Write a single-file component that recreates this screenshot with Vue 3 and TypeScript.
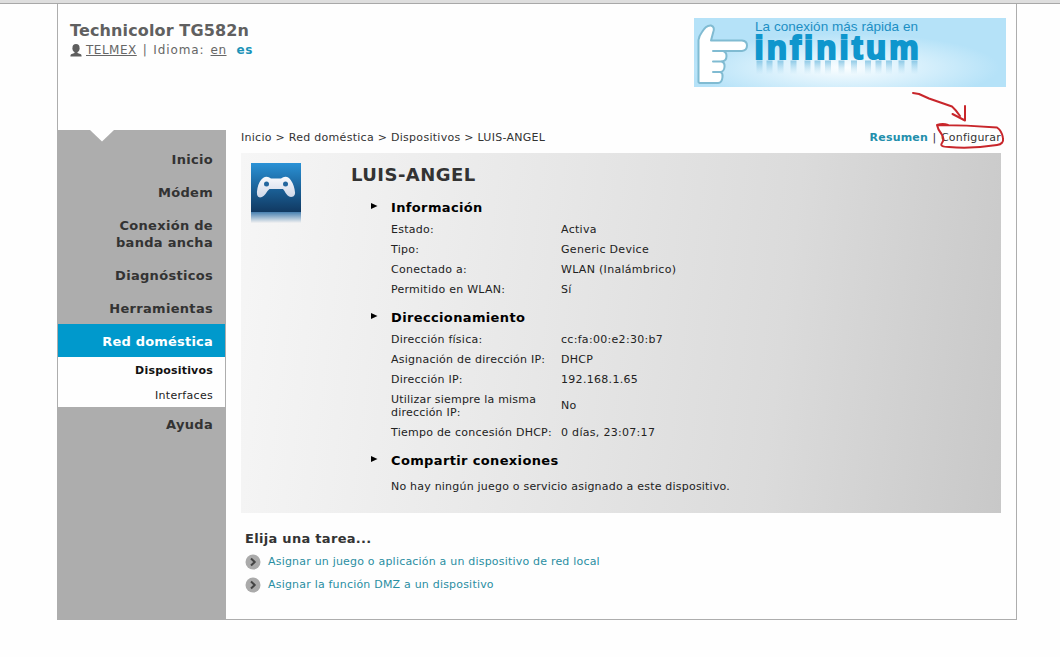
<script setup lang="ts">
interface Row { label: string; value: string; tall?: boolean }
interface Section { title: string; rows: Row[]; note?: string }

const menu: string[] = ['Inicio', 'Módem', 'Conexión de banda ancha', 'Diagnósticos', 'Herramientas']
const crumbs: string[] = ['Inicio', 'Red doméstica', 'Dispositivos', 'LUIS-ANGEL']
const sections: Section[] = [
  {
    title: 'Información',
    rows: [
      { label: 'Estado:', value: 'Activa' },
      { label: 'Tipo:', value: 'Generic Device' },
      { label: 'Conectado a:', value: 'WLAN (Inalámbrico)' },
      { label: 'Permitido en WLAN:', value: 'Sí' },
    ],
  },
  {
    title: 'Direccionamiento',
    rows: [
      { label: 'Dirección física:', value: 'cc:fa:00:e2:30:b7' },
      { label: 'Asignación de dirección IP:', value: 'DHCP' },
      { label: 'Dirección IP:', value: '192.168.1.65' },
      { label: 'Utilizar siempre la misma dirección IP:', value: 'No', tall: true },
      { label: 'Tiempo de concesión DHCP:', value: '0 días, 23:07:17' },
    ],
  },
  {
    title: 'Compartir conexiones',
    rows: [],
    note: 'No hay ningún juego o servicio asignado a este dispositivo.',
  },
]
const tasks: string[] = [
  'Asignar un juego o aplicación a un dispositivo de red local',
  'Asignar la función DMZ a un dispositivo',
]
// Left edges of the letter stems whose reflections fade below the logo
const stems: number[] = [62.5, 72.5, 83.5, 96.5, 110.5, 120.5, 131, 144.5, 157, 171, 181.5, 192, 204.5, 217.5]
</script>

<template>
  <div class="screen">
    <div class="topbar"></div>
    <div class="page">
      <header class="header">
        <div class="brand">
          <h1>Technicolor TG582n</h1>
          <div class="userline">
            <svg class="user" width="12" height="13" viewBox="0 0 12 13">
              <ellipse cx="6" cy="4.2" rx="3.6" ry="4.1" fill="#5e5e5e" />
              <path d="M4.5 7h3v2l3.4 1.2q.7.4.7 2.3H.4q0-1.9.7-2.3L4.5 9z" fill="#5e5e5e" />
            </svg>
            <a class="u telmex">TELMEX</a><span class="bar">|</span><span class="idioma">Idioma:</span><a class="u en">en</a><b class="es">es</b>
          </div>
        </div>
        <svg class="banner" width="312" height="69" viewBox="0 0 312 69">
          <defs>
            <radialGradient id="glow" cx="0.48" cy="0.72" r="0.5">
              <stop offset="0" stop-color="#fbfeff" />
              <stop offset="0.35" stop-color="#e2f4fd" />
              <stop offset="1" stop-color="#b5e2f8" />
            </radialGradient>
            <linearGradient id="mirror" x1="0" y1="0" x2="0" y2="1">
              <stop offset="0" stop-color="#5fb2da" stop-opacity="0.65" />
              <stop offset="1" stop-color="#9fd4ee" stop-opacity="0" />
            </linearGradient>
          </defs>
          <rect width="312" height="69" fill="url(#glow)" />
          <path d="M4.5 64V22Q5 18 8 14Q12 7 17 7.5Q21.5 9 19 15L17 22.5H48Q53 23 53 27.5Q53 32.5 48 33H29Q32.5 34 32.5 38Q32.5 43 28 43.5Q31 45 30.5 49Q30 53.5 26.5 54Q29 55 28.5 59Q28 65 24 65H5.5Z" fill="#fff" stroke="#80bbd2" stroke-width="2" stroke-linejoin="round" />
          <path d="M19 33H29M19 43.5H28M19 54H26" stroke="#80bbd2" stroke-width="2" stroke-linecap="round" />
          <rect v-for="x in stems" :key="x" :x="x" y="42.5" width="6" height="14" fill="url(#mirror)" />
          <text class="slogan" x="61" y="13" textLength="163" lengthAdjust="spacing">La conexión más rápida en</text>
          <text class="logo" x="60.5" y="41" textLength="164" lengthAdjust="spacing">infinitum</text>
        </svg>
      </header>

      <div class="body">
        <nav class="sidebar">
          <svg class="notch" width="24" height="12" viewBox="0 0 24 12"><path d="M0 0H24L12 11.5Z" fill="#fff" /></svg>
          <a v-for="m in menu" :key="m" class="item">{{ m }}</a>
          <a class="item active">Red doméstica</a>
          <div class="sub">
            <a class="selected">Dispositivos</a>
            <a>Interfaces</a>
          </div>
          <a class="item">Ayuda</a>
        </nav>

        <main class="main">
          <div class="crumbbar">
            <span class="crumbs">{{ crumbs.join(' > ') }}</span>
            <span class="tabs"><b>Resumen</b><i>|</i><a>Configurar</a></span>
            <svg class="scribble" width="100" height="62" viewBox="0 0 100 62" fill="none" stroke="#c8262b" stroke-width="2" stroke-linecap="round" stroke-linejoin="round">
              <path d="M7 4L13 5L23 9.5L46 17.5Q50 21 54 27" />
              <path d="M59 17V31.5L46.5 25" />
              <path d="M31 36Q60 36 91 38.5Q96 42 97 49Q98 55 91 56Q65 60 43 58Q33 58 36 54Q39 50 35.5 45Q32 41 31 36Q37 34 42 36" />
            </svg>
          </div>

          <section class="panel">
            <svg class="device" width="50" height="60" viewBox="0 0 50 60">
              <defs>
                <linearGradient id="blue" x1="0" y1="0" x2="0" y2="1">
                  <stop offset="0" stop-color="#2a92d6" />
                  <stop offset="0.5" stop-color="#1b6299" />
                  <stop offset="1" stop-color="#10375f" />
                </linearGradient>
                <linearGradient id="shadow" x1="0" y1="0" x2="0" y2="1">
                  <stop offset="0" stop-color="#4880b0" />
                  <stop offset="1" stop-color="#f2f2f2" />
                </linearGradient>
                <linearGradient id="pad" x1="0" y1="0" x2="0" y2="1">
                  <stop offset="0" stop-color="#f8f9fc" />
                  <stop offset="1" stop-color="#cfd8e8" />
                </linearGradient>
              </defs>
              <rect width="50" height="50" fill="url(#blue)" />
              <rect y="49" width="50" height="11" fill="url(#shadow)" />
              <path d="M12 15Q16 12.500 20 15.500H30Q34 12.500 38 15Q42 19 43.500 26Q45.500 34 40 34Q36 33.500 33.500 28L32 26H18.500L16.500 28Q13 34 9 34.500Q4.500 34 6.500 25Q8 18 12 15Z" fill="url(#pad)" />
              <circle cx="15.5" cy="21" r="2.5" fill="#23669e" />
              <circle cx="34.5" cy="21" r="2.5" fill="#23669e" />
            </svg>
            <div class="details">
              <h2>LUIS-ANGEL</h2>
              <div v-for="s in sections" :key="s.title" class="section">
                <h3><svg width="7" height="6" viewBox="0 0 7 6"><path d="M0 0L6.500 3L0 6Z" fill="#000" /></svg><span>{{ s.title }}</span></h3>
                <div v-for="r in s.rows" :key="r.label" class="row" :class="{ tall: r.tall }">
                  <span class="label">{{ r.label }}</span><span>{{ r.value }}</span>
                </div>
                <p v-if="s.note">{{ s.note }}</p>
              </div>
            </div>
          </section>

          <section class="tasks">
            <h4>Elija una tarea...</h4>
            <a v-for="t in tasks" :key="t">
              <svg width="16" height="16" viewBox="0 0 16 16">
                <circle cx="8" cy="8" r="7.5" fill="#aaaaaa" />
                <path d="M6 4.5L9.7 8L6 11.5" fill="none" stroke="#444" stroke-width="2" />
              </svg><span>{{ t }}</span>
            </a>
          </section>
        </main>
      </div>
    </div>
  </div>
</template>

<style>
body { margin: 0; background: #fff; overflow: hidden; }
</style>

<style scoped>
* { box-sizing: border-box; }
.screen { width: 1060px; height: 657px; background: #fefefe; font-family: Verdana, "DejaVu Sans", sans-serif; font-size: 11px; color: #222; white-space: nowrap; }
h1, h2, h3, h4, p { margin: 0; }
.topbar { height: 4px; background: #dedede; border-bottom: 1px solid #a8a8a8; }
.page { width: 960px; height: 616px; margin-left: 57px; border: 1px solid #adadad; border-top: 0; display: flex; flex-direction: column; }
.header { height: 126px; display: flex; justify-content: space-between; padding: 14px 10px 0 12px; }
.brand { padding-top: 2px; color: #666; }
h1 { font-size: 16px; line-height: 21px; letter-spacing: .13px; color: #606060; }
.userline { display: flex; align-items: center; height: 18px; font-size: 12px; letter-spacing: .5px; }
.user { margin-right: 4px; }
.u { text-decoration: underline; }
.idioma { letter-spacing: .9px; }
.bar { margin: 0 6px; }
.en { margin-left: 6px; }
.es { margin-left: 10px; color: #1c93b8; }
.slogan { font: 13.5px "Liberation Sans", Arial, sans-serif; fill: #1c8fc4; }
.logo { font: bold 33px "Liberation Sans", Arial, sans-serif; fill: #0f96cd; stroke: #0f96cd; stroke-width: 2px; }
.body { flex: 1; display: flex; }
.sidebar { position: relative; width: 168px; padding-top: 12px; background: #adadad; display: flex; flex-direction: column; text-align: right; }
.notch { position: absolute; left: 32px; top: 0; }
.item { padding: 9px 13px 7px 40px; font-size: 13px; line-height: 17px; font-weight: bold; letter-spacing: .3px; color: #333; white-space: normal; }
.active { background: #0099cc; color: #fff; margin-right: 1px; padding-right: 12px; letter-spacing: .2px; }
.sub { margin-right: 1px; background: #fefefe; display: flex; flex-direction: column; }
.sub a { height: 25px; line-height: 27px; padding-right: 12px; color: #222; letter-spacing: .3px; }
.sub .selected { font-weight: bold; color: #111; letter-spacing: .2px; }
.main { width: 760px; margin-left: 15px; }
.crumbbar { position: relative; height: 23px; line-height: 15px; display: flex; justify-content: space-between; color: #333; letter-spacing: .28px; }
.tabs { letter-spacing: .2px; }
.tabs b { color: #238fac; }
.tabs i { font-style: normal; margin: 0 4.5px; }
.scribble { position: absolute; left: 665px; top: -41px; }
.panel { height: 360px; display: flex; padding: 10px; background: linear-gradient(97deg, #f6f6f6 0%, #e7e7e7 40%, #dbdbdb 70%, #c8c8c8 100%); }
.details { margin-left: 50px; }
h2 { font-size: 18px; line-height: 24px; margin-bottom: 9px; letter-spacing: .45px; color: #333; }
.section { margin-bottom: 7px; }
h3 { display: flex; align-items: center; height: 22px; margin: 0 0 1px 20px; font-size: 13px; letter-spacing: .36px; color: #000; }
h3 svg { margin-right: 13px; margin-top: -3px; }
.row { display: flex; align-items: center; height: 20px; margin-left: 40px; line-height: 13px; letter-spacing: .3px; }
.tall { height: 33px; }
.label { width: 170px; padding-right: 5px; flex: none; letter-spacing: .25px; }
.tall .label { white-space: normal; letter-spacing: .2px; }
.section p { margin-left: 40px; line-height: 29px; letter-spacing: .21px; }
.tasks { padding: 16px 4px; display: flex; flex-direction: column; }
.tasks h4 { font-size: 13px; line-height: 20px; margin-bottom: 1px; letter-spacing: .3px; color: #333; }
.tasks a { display: flex; align-items: center; gap: 7px; height: 23px; letter-spacing: .2px; color: #2a8ea2; }
</style>
